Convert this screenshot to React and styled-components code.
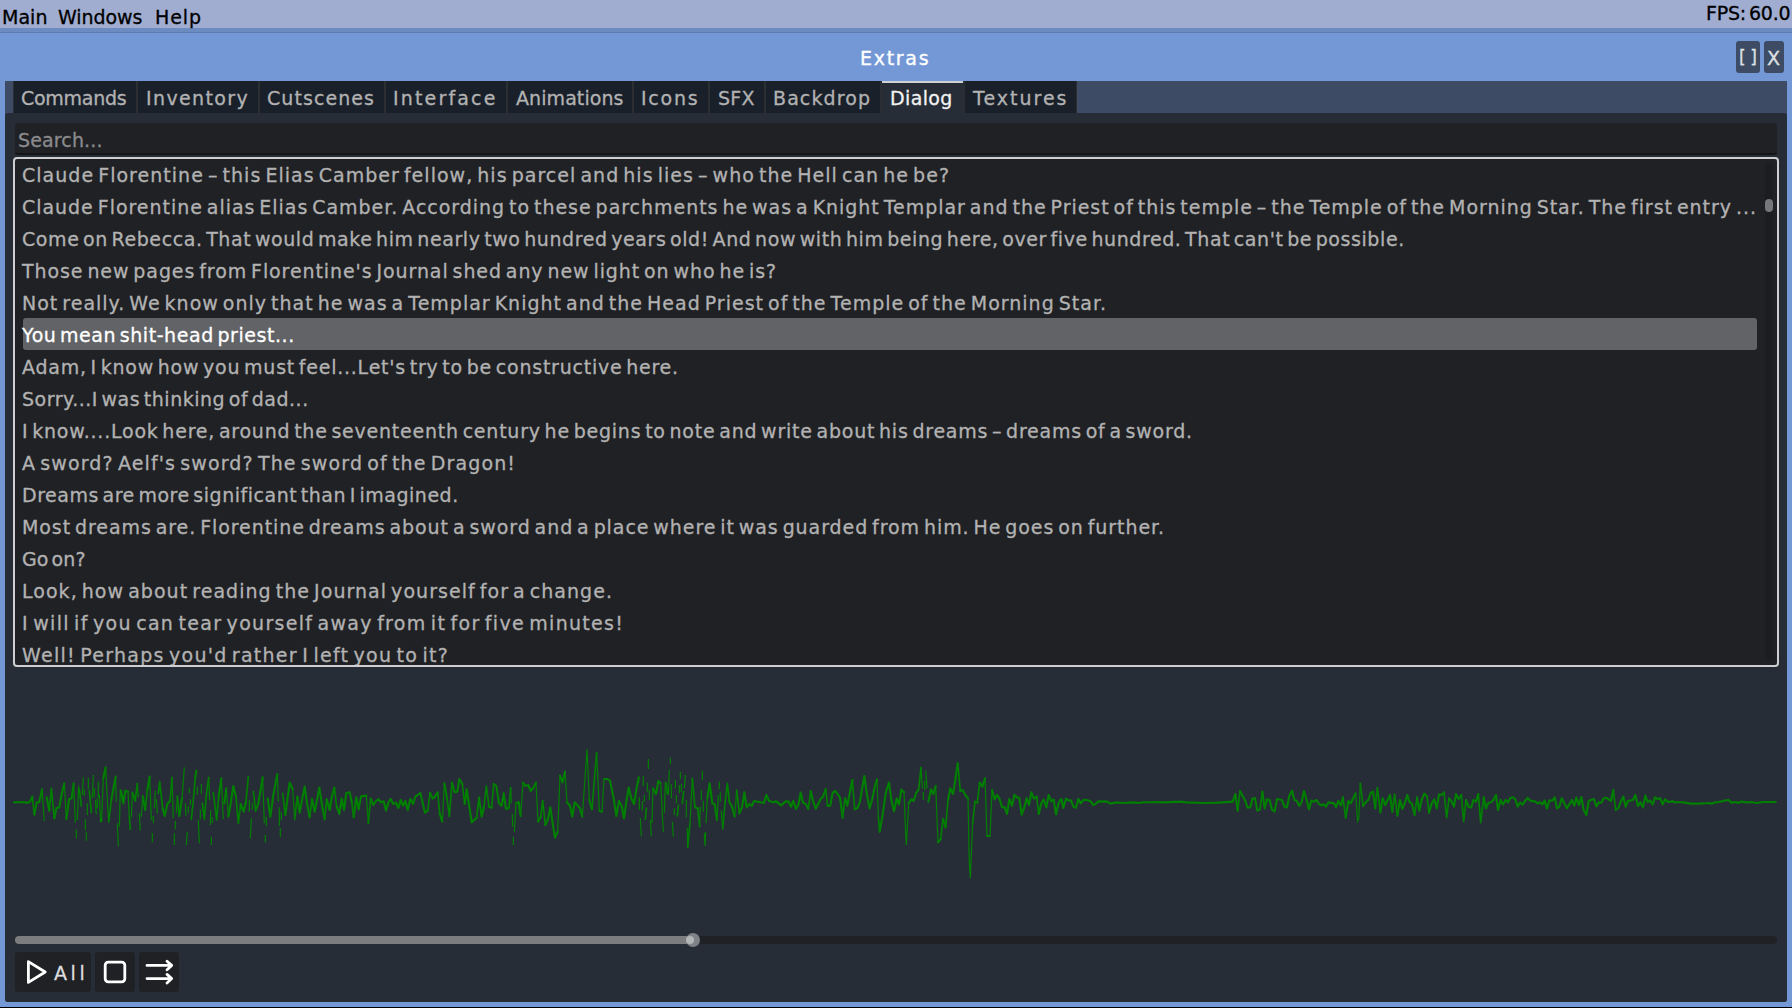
import React, { useLayoutEffect, useRef, useState } from "react";
import styled, { createGlobalStyle } from "styled-components";

const GlobalStyle = createGlobalStyle`
  * { box-sizing: border-box; }
  html, body { margin: 0; padding: 0; background: #000; overflow: hidden; }
  body { font-family: "DejaVu Sans", sans-serif; font-size: 19px; color: #b2b2b2; }
  button { font: inherit; border: 0; margin: 0; padding: 0; }
`;

const Screen = styled.div`
  width: 1792px;
  height: 1008px;
  display: flex;
  flex-direction: column;
  background: #7498d6;
  border-bottom: 1px solid #000;
`;

const Glyphs = styled.span`
  display: inline-block;
  white-space: pre;
  margin-left: -1px;
  word-spacing: -3px;
  -webkit-text-stroke: 0.3px currentColor;
  font-size: ${(p) => p.$size || 19}px;
  line-height: ${(p) => p.$line}px;
  color: ${(p) => p.$color || "inherit"};
`;

/* Spaces the letters evenly so that the label fills the given width. */
function Label({ width, line, color, size, children }) {
  const ref = useRef(null);
  const [spacing, setSpacing] = useState(null);
  useLayoutEffect(() => {
    if (spacing !== null) return;
    const natural = ref.current.getBoundingClientRect().width;
    setSpacing((width + 1.5 - natural) / (children.length - 0.5));
  }, [spacing, width, children]);
  return (
    <Glyphs ref={ref} $line={line} $color={color} $size={size} style={{ letterSpacing: `${spacing || 0}px` }}>
      {children}
    </Glyphs>
  );
}

const MenuBar = styled.header`
  height: 33px;
  display: flex;
  align-items: flex-start;
  justify-content: space-between;
  background: linear-gradient(#a0add0 28px, #6c8bc1 28px, #6c8bc1 32px, #5d7bb0 32px);
  color: #000;
`;

const Menus = styled.nav`
  display: flex;
  padding: 6px 0 0 3px;
`;

const MenuItem = styled.div`
  width: ${(p) => p.$width}px;
  height: 22px;
`;

const Fps = styled.div`
  width: 86px;
  padding: 2px 0 0 1px;
`;

const TitleBar = styled.div`
  height: 48px;
  display: grid;
  grid-template-columns: 860px 1fr auto;
  padding-right: 8px;
  color: #fff;
`;

const Title = styled.div`
  padding: 14px 0 0 1px;
`;

const WindowButtons = styled.div`
  display: flex;
  gap: 4px;
  padding-top: 8px;
`;

const WindowButton = styled.button`
  width: ${(p) => p.$width}px;
  height: 32px;
  display: flex;
  align-items: flex-start;
  padding-left: 4px;
  border-radius: 3px;
  background: #3d4c64;
  color: #dfe0e3;
`;

const Frame = styled.main`
  height: 921px;
  margin: 0 5px;
  display: flex;
  flex-direction: column;
  background: #3d4c64;
  border-radius: 0 0 3px 3px;
`;

const TabBar = styled.div`
  height: 32px;
  display: flex;
  padding-left: 8px;
`;

const Tab = styled.div`
  width: ${(p) => p.$width}px;
  height: 32px;
  padding-left: ${(p) => p.$pad + 1}px;
  border-left: 1px solid ${(p) => (p.$active ? "#272d37" : "#2d2e31")};
  border-right: 1px solid ${(p) => (p.$active ? "#272d37" : "#2d2e31")};
  background: ${(p) => (p.$active ? "#272d37" : "#19202a")};
  box-shadow: ${(p) => (p.$active ? "inset 0 2px 0 #cfd1d5" : "none")};
  color: ${(p) => (p.$active ? "#f2f2f2" : "#b2b2b2")};
`;

const Panel = styled.section`
  flex: 1;
  display: flex;
  flex-direction: column;
  padding: 10px 8px 0;
  background: #272d37;
  border-radius: 3px;
`;

const Search = styled.div`
  height: 32px;
  margin: 0 2px;
  padding-left: 4px;
  border-radius: 3px;
  border-bottom: 2px solid #131416;
  background: #202125;
  color: #8b8b8d;
`;

const ListBox = styled.div`
  height: 510px;
  margin-top: 2px;
  border: 2px solid #cfcfd1;
  border-radius: 4px;
  background: #202125;
  overflow: hidden;
  display: flex;
  justify-content: space-between;
  padding: 0 4px 0 8px;
`;

const Rows = styled.div`
  width: 1734px;
  margin-top: -1px;
`;

const Row = styled.div`
  height: 32px;
  border-radius: 3px;
  background: ${(p) => (p.$selected ? "#626367" : "transparent")};
  color: ${(p) => (p.$selected ? "#fff" : "#b2b2b2")};
`;

const Scrollbar = styled.div`
  width: 8px;
  height: 497px;
  margin-top: 4px;
  padding-top: 36px;
  border-radius: 4px;
  background: #1c1d1f;
`;

const Thumb = styled.div`
  height: 13px;
  border-radius: 4px;
  background: #76777b;
`;

const WaveArea = styled.div`
  height: 269px;
  padding-top: 53px;
`;

const Wave = styled.svg`
  display: block;
  width: 1766px;
  height: 170px;
  margin-left: -1px;
`;

const Slider = styled.div`
  height: 8px;
  margin: 0 2px;
  display: flex;
  align-items: center;
  border-radius: 4px;
  background: #202125;
`;

const SliderFill = styled.div`
  width: 678px;
  height: 8px;
  border-radius: 4px 0 0 4px;
  background: #7c7d7e;
`;

const Knob = styled.div`
  width: 14px;
  height: 14px;
  margin-left: -7px;
  border-radius: 50%;
  display: flex;
  align-items: center;
  background: #7f8286;
`;

const KnobCore = styled.div`
  width: 8px;
  height: 8px;
  border-radius: 4px;
  background: #b4b5b6;
`;

const Controls = styled.div`
  display: flex;
  gap: 4px;
  margin: 8px 2px 0;
`;

const Control = styled.button`
  width: ${(p) => p.$width}px;
  height: 40px;
  display: flex;
  border-radius: 3px;
  background: #202125;
  color: #dddddf;
  svg { display: block; flex: none; }
`;

const Caption = styled.span`
  padding-top: 4px;
`;

const menus = [
  { text: "Main", box: 56, width: 44 },
  { text: "Windows", box: 97, width: 83 },
  { text: "Help", box: 50, width: 45 },
];

const tabs = [
  { text: "Commands", box: 124, pad: 7, width: 104 },
  { text: "Inventory", box: 122, pad: 8, width: 101 },
  { text: "Cutscenes", box: 126, pad: 7, width: 106 },
  { text: "Interface", box: 122, pad: 7, width: 102 },
  { text: "Animations", box: 126, pad: 8, width: 106 },
  { text: "Icons", box: 76, pad: 7, width: 56 },
  { text: "SFX", box: 56, pad: 8, width: 35 },
  { text: "Backdrop", box: 116, pad: 7, width: 96 },
  { text: "Dialog", box: 83, pad: 8, width: 61 },
  { text: "Textures", box: 113, pad: 8, width: 93 },
];

const lines = [
  ["Claude Florentine – this Elias Camber fellow, his parcel and his lies – who the Hell can he be?", 926],
  ["Claude Florentine alias Elias Camber. According to these parchments he was a Knight Templar and the Priest of this temple – the Temple of the Morning Star. The first entry ...", 1733],
  ["Come on Rebecca. That would make him nearly two hundred years old! And now with him being here, over five hundred. That can't be possible.", 1381],
  ["Those new pages from Florentine's Journal shed any new light on who he is?", 753],
  ["Not really. We know only that he was a Templar Knight and the Head Priest of the Temple of the Morning Star.", 1083],
  ["You mean shit-head priest...", 271],
  ["Adam, I know how you must feel...Let's try to be constructive here.", 655],
  ["Sorry...I was thinking of dad...", 285],
  ["I know....Look here, around the seventeenth century he begins to note and write about his dreams – dreams of a sword.", 1169],
  ["A sword? Aelf's sword? The sword of the Dragon!", 492],
  ["Dreams are more significant than I imagined.", 435],
  ["Most dreams are. Florentine dreams about a sword and a place where it was guarded from him. He goes on further.", 1141],
  ["Go on?", 62],
  ["Look, how about reading the Journal yourself for a change.", 589],
  ["I will if you can tear yourself away from it for five minutes!", 600],
  ["Well! Perhaps you'd rather I left you to it?", 425],
];

/* Sample points in thirds of a pixel; ";" breaks the trace. */
const wave = [
  {
    start: 0,
    trace:
      "42,247 60,246 72,247 84,248 90,245 97,230 103,284 110,248 118,245 126,208 133,303;140,232 148,272 154,205 163,295 169,265 178,262 185,222 193,190 199,297 207,238 215,235 221,190 226,308;229,328 229,355;232,300 236,197;238,208 244,258;247,225 250,172;253,208 253,228;256,298 256,330;259,335 259,362;262,285 262,250;265,173 265,208;268,212 274,277;277,235 280,165;283,205 283,232;286,240 289,283;292,265 292,235;295,185 295,232;298,225 302,304 305,300 310,175 317,142 321,220 326,306 334,240 347,170 349,245;352,310 355,378;358,320 361,208;363,212 370,250 376,212 384,215 388,290 391,328;394,292 397,218 406,242 412,190 415,232;418,280 421,332;424,290 428,228 436,270 442,210 449,170 454,300;457,340 457,367;460,310 460,288;463,265 466,212;469,238 472,280;475,220 479,185 488,265 494,288 502,252 510,243 516,172 520,295;523,340 523,375;526,328 526,302;529,280 532,228 538,288 546,235 553,142;556,250 558,288;559,375 562,335;565,278 565,258;568,205 568,220;571,238 571,255;574,298 580,240 586,172 589,152;592,200 592,225;595,300 598,370;601,298 601,268;604,192 604,222;607,250 613,298 619,225 626,172 629,240;631,315 632,270;634,350 634,375;637,310 637,292;640,218 650,300 656,230 664,175 670,298;673,250 679,205 685,290 693,245 700,198 708,230 715,310 722,252 731,275 738,245 745,170;748,240 748,275;751,355 754,295;757,270 757,248;760,215 767,272 775,250 788,172 793,310;796,345 796,367;799,318 799,290;803,235 811,290 820,225 832,162 835,245;838,262 838,318;841,350 841,325;844,300 844,275;848,220 856,285 862,240 869,188 878,207 884,298 892,230 899,278 907,235 914,200 921,250 929,292 936,237 944,275 951,240 958,203 966,255 974,298 980,238 989,270 996,228 1003,203 1010,260 1018,282 1025,236 1032,270 1039,219 1049,217 1055,245 1061,292 1069,232 1076,268 1083,229 1099,227 1105,310 1112,236 1120,255 1128,243 1135,238 1143,247 1151,244 1158,272 1165,248 1172,237 1180,252 1188,248 1195,264 1202,240 1209,257 1216,243 1223,270 1231,237 1239,252 1246,230 1261,219 1268,248 1275,278 1283,272 1290,219 1298,236 1305,230 1313,217 1319,280",
  },
  {
    start: 1320,
    trace:
      "-1,280 7,305 13,190 21,235 28,290 36,188 44,217 52,215 58,177 67,192 74,252 80,208 88,260 95,307 110,293 117,233 125,290 132,260 139,198 147,260 155,263 161,192 169,198 177,250 185,257 191,220 198,267 207,263 212,203 214,250;217,282 218,320;220,350 220,375;223,335 228,250 236,246 242,288 249,188 256,198 265,195 272,213 280,203 288,188 294,305 302,290 308,242 316,315 324,297 331,262 338,310 345,353 353,335 360,167 368,187 375,155 381,247 390,257 397,290 404,247 419,263 427,290 434,190 441,88 448,240 456,268 463,180 470,98 478,273 486,275 492,177 501,177 510,182 520,230 529,288 537,243 545,258 552,295 559,245 566,203 574,235 582,252 589,210 596,172 596,190;598,232 598,270;601,295 604,348;607,272 607,243;610,168 610,198;613,225 613,245;616,298 619,265;622,188 622,215;625,117 625,147;628,210 628,240;631,300 634,348;636,310 639,205 648,222 655,183 662,190 670,335;673,278 676,185;679,190 682,222;685,225 688,150;691,113 691,133;694,193 694,235;697,305 700,350;703,265 703,285;706,180 706,205;709,225 709,250;712,288 715,255;718,220 718,195;721,155 721,178;724,192 724,215;727,250 731,215;733,205 736,165;739,240 739,292;742,325 743,382 750,310 757,175 765,262 773,265 779,320 781,260;784,210 784,240;787,152 787,180;790,242 790,275;793,340 795,378 797,335;798,310 802,235 809,190 817,250 824,253 831,300 835,225;838,185 838,208;841,215 841,245;844,272 848,327 855,250 862,190 868,245 876,260 884,290 890,210 898,280 906,262 913,217 920,262 928,252 935,258 942,243 972,249 979,225 987,243 1001,247 1009,244 1023,256 1037,244 1046,245 1053,260 1060,243 1068,267 1075,255 1082,218 1089,248 1098,253 1105,267 1112,213 1119,243 1127,266 1142,237 1149,230 1157,207 1163,258 1171,257 1178,218 1186,213 1200,233 1208,293 1215,235 1222,257 1230,215 1237,180 1244,268 1252,264 1259,248 1273,168 1281,225 1289,265 1296,240 1304,202 1311,178 1315,290 1319,335",
  },
  {
    start: 2640,
    trace:
      "-1,335 7,290 18,215 27,188 34,240 42,274 50,236 57,253 64,209 72,217 77,340 79,375 86,250 94,238 101,243 108,220 116,208 123,142 127,205;130,215 130,240;134,182 134,210;137,152 141,205;145,245 153,208 160,222 167,198 174,367 182,358 189,297 197,322 204,240 211,205 219,222 226,180 233,130 241,213 248,210 256,225 264,235 268,430 271,475 278,310 285,245 292,248 299,188 307,200 315,175 321,348 330,348 336,210 344,238 351,225 358,235 366,261 374,262 381,282 388,237 396,257 403,225 411,232 418,235 425,284 433,262 440,235 447,255 454,217 462,236 470,230 476,282 484,250 491,239 499,262 506,225 514,244 521,239 528,283 536,248 544,237 550,264 558,236 565,241 573,241 580,260 588,263 595,237 602,250 609,241 617,239 632,244 640,255 647,252 655,244 682,245 691,251 710,247 727,249 760,247 778,249 787,247 822,246 850,247 900,245 920,247 972,249 1015,248 1058,245 1066,222 1073,272 1080,213 1088,228 1096,243 1102,262 1111,262 1117,236 1125,234 1132,272 1140,268 1147,215 1154,265 1161,238 1169,241 1176,270 1184,274 1191,237 1206,240 1214,261 1221,262 1228,227 1236,212 1243,240 1250,242 1258,258 1265,245 1272,213 1280,240 1287,268 1294,242 1302,245 1310,240 1317,252 1325,256",
  },
  {
    start: 3960,
    trace:
      "5,256 12,253 18,260 25,247 42,250 48,262 55,243 63,256 69,232 77,293 85,243 92,250 99,236 107,220 113,308;116,300 121,190 129,258 137,247 145,240 152,219 159,215 166,265 172,203 181,277 188,235 196,255 210,225 217,275 224,222 232,287 240,240 247,267 254,250 262,225 268,245 276,252 284,285 291,232 298,272 305,240 313,221 321,229 327,278 335,250 343,238 350,265 357,223 365,225 372,217 380,293 387,235 394,243 402,260 408,222 416,237 424,225 431,305 438,240 446,261 454,262 460,240 468,245 475,222 482,308 491,232 498,265 505,249 513,247 520,240 528,225 534,270 542,240 549,253 557,240 564,247 571,234 579,232 586,238 593,260 600,248 608,254 615,243 623,234 630,242 645,244 653,250 660,247 667,253 674,242 681,266 688,241 697,242 704,232 711,265 718,260 725,235 733,250 741,265 748,253 756,240 763,257 769,233 777,255 784,231 791,270 799,285 806,243 815,239 822,237 829,259 836,248 844,248 850,236 858,233 873,243 880,210 887,270 895,264 902,245 910,230 917,260 924,243 939,240 946,225 954,258 961,247 969,262 976,227 983,246 991,242 998,253 1005,232 1013,237 1021,235 1028,253 1035,238 1043,245 1050,246 1057,243 1063,247 1072,246 1090,247 1112,251 1140,251 1165,249 1175,251 1185,247 1197,246 1212,242 1226,240 1234,248 1248,246 1255,249 1263,245 1280,247 1293,246 1310,249 1328,246 1367,246",
  },
];

function buildWave() {
  const groups = { thin: "", mid: "", full: "" };
  wave.forEach(({ start, trace }) => {
    trace.split(";").forEach((run) => {
      const pts = run.split(" ").map((s) => s.split(",").map(Number));
      for (let i = 1; i < pts.length; i++) {
        const [x0, y0] = pts[i - 1];
        const [x1, y1] = pts[i];
        const slope = Math.abs(y1 - y0) / Math.max(0.1, Math.abs(x1 - x0));
        const key = slope > 13 ? "thin" : slope > 7.5 ? "mid" : "full";
        groups[key] += `M${start + x0} ${y0}L${start + x1} ${y1}`;
      }
    });
  });
  return groups;
}

const paths = buildWave();

export default function App() {
  return (
    <>
      <GlobalStyle />
      <Screen>
        <MenuBar>
          <Menus>
            {menus.map((m) => (
              <MenuItem key={m.text} $width={m.box}>
                <Label width={m.width} line={23}>{m.text}</Label>
              </MenuItem>
            ))}
          </Menus>
          <Fps>
            <Label width={83} line={23}>FPS: 60.0</Label>
          </Fps>
        </MenuBar>
        <TitleBar>
          <span />
          <Title>
            <Label width={68} line={23}>Extras</Label>
          </Title>
          <WindowButtons>
            <WindowButton $width={24}>
              <Label width={17} line={32} size={17}>[ ]</Label>
            </WindowButton>
            <WindowButton $width={20}>
              <Label width={13} line={35}>X</Label>
            </WindowButton>
          </WindowButtons>
        </TitleBar>
        <Frame>
          <TabBar>
            {tabs.map((t) => (
              <Tab key={t.text} $width={t.box} $pad={t.pad} $active={t.text === "Dialog"}>
                <Label width={t.width} line={34}>{t.text}</Label>
              </Tab>
            ))}
          </TabBar>
          <Panel>
            <Search>
              <Label width={83} line={35}>Search...</Label>
            </Search>
            <ListBox>
              <Rows>
                {lines.map(([text, width], i) => (
                  <Row key={i} $selected={i === 5}>
                    <Label width={width} line={35}>{text}</Label>
                  </Row>
                ))}
              </Rows>
              <Scrollbar>
                <Thumb />
              </Scrollbar>
            </ListBox>
            <WaveArea>
              <Wave viewBox="36 0 5298 510" fill="none" stroke="#008000" strokeLinecap="round">
                <path d={paths.full} strokeWidth="6.4" />
                <path d={paths.mid} strokeWidth="5" />
                <path d={paths.thin} strokeWidth="3.6" strokeLinecap="butt" />
              </Wave>
            </WaveArea>
            <Slider>
              <SliderFill />
              <Knob>
                <KnobCore />
              </Knob>
            </Slider>
            <Controls>
              <Control $width={76}>
                <svg width="40" height="40" fill="none" stroke="#fff" strokeWidth="2.8" strokeLinejoin="round">
                  <path d="M13.4 9.6 L30.2 20 L13.4 30.4 Z" />
                </svg>
                <Caption>
                  <Label width={31} line={35}>All</Label>
                </Caption>
              </Control>
              <Control $width={40}>
                <svg width="40" height="40" fill="none" stroke="#fff" strokeWidth="2.8">
                  <rect x="10.2" y="10.2" width="19.6" height="19.6" rx="3" />
                </svg>
              </Control>
              <Control $width={40}>
                <svg width="40" height="40" fill="none" stroke="#fff" strokeWidth="2.8" strokeLinecap="round" strokeLinejoin="round">
                  <path d="M8 13.4H32.5M28 9.2L32.7 13.4L28 17.8M8 26.6H32.5M28 22.4L32.7 26.6L28 31" />
                </svg>
              </Control>
            </Controls>
          </Panel>
        </Frame>
      </Screen>
    </>
  );
}
